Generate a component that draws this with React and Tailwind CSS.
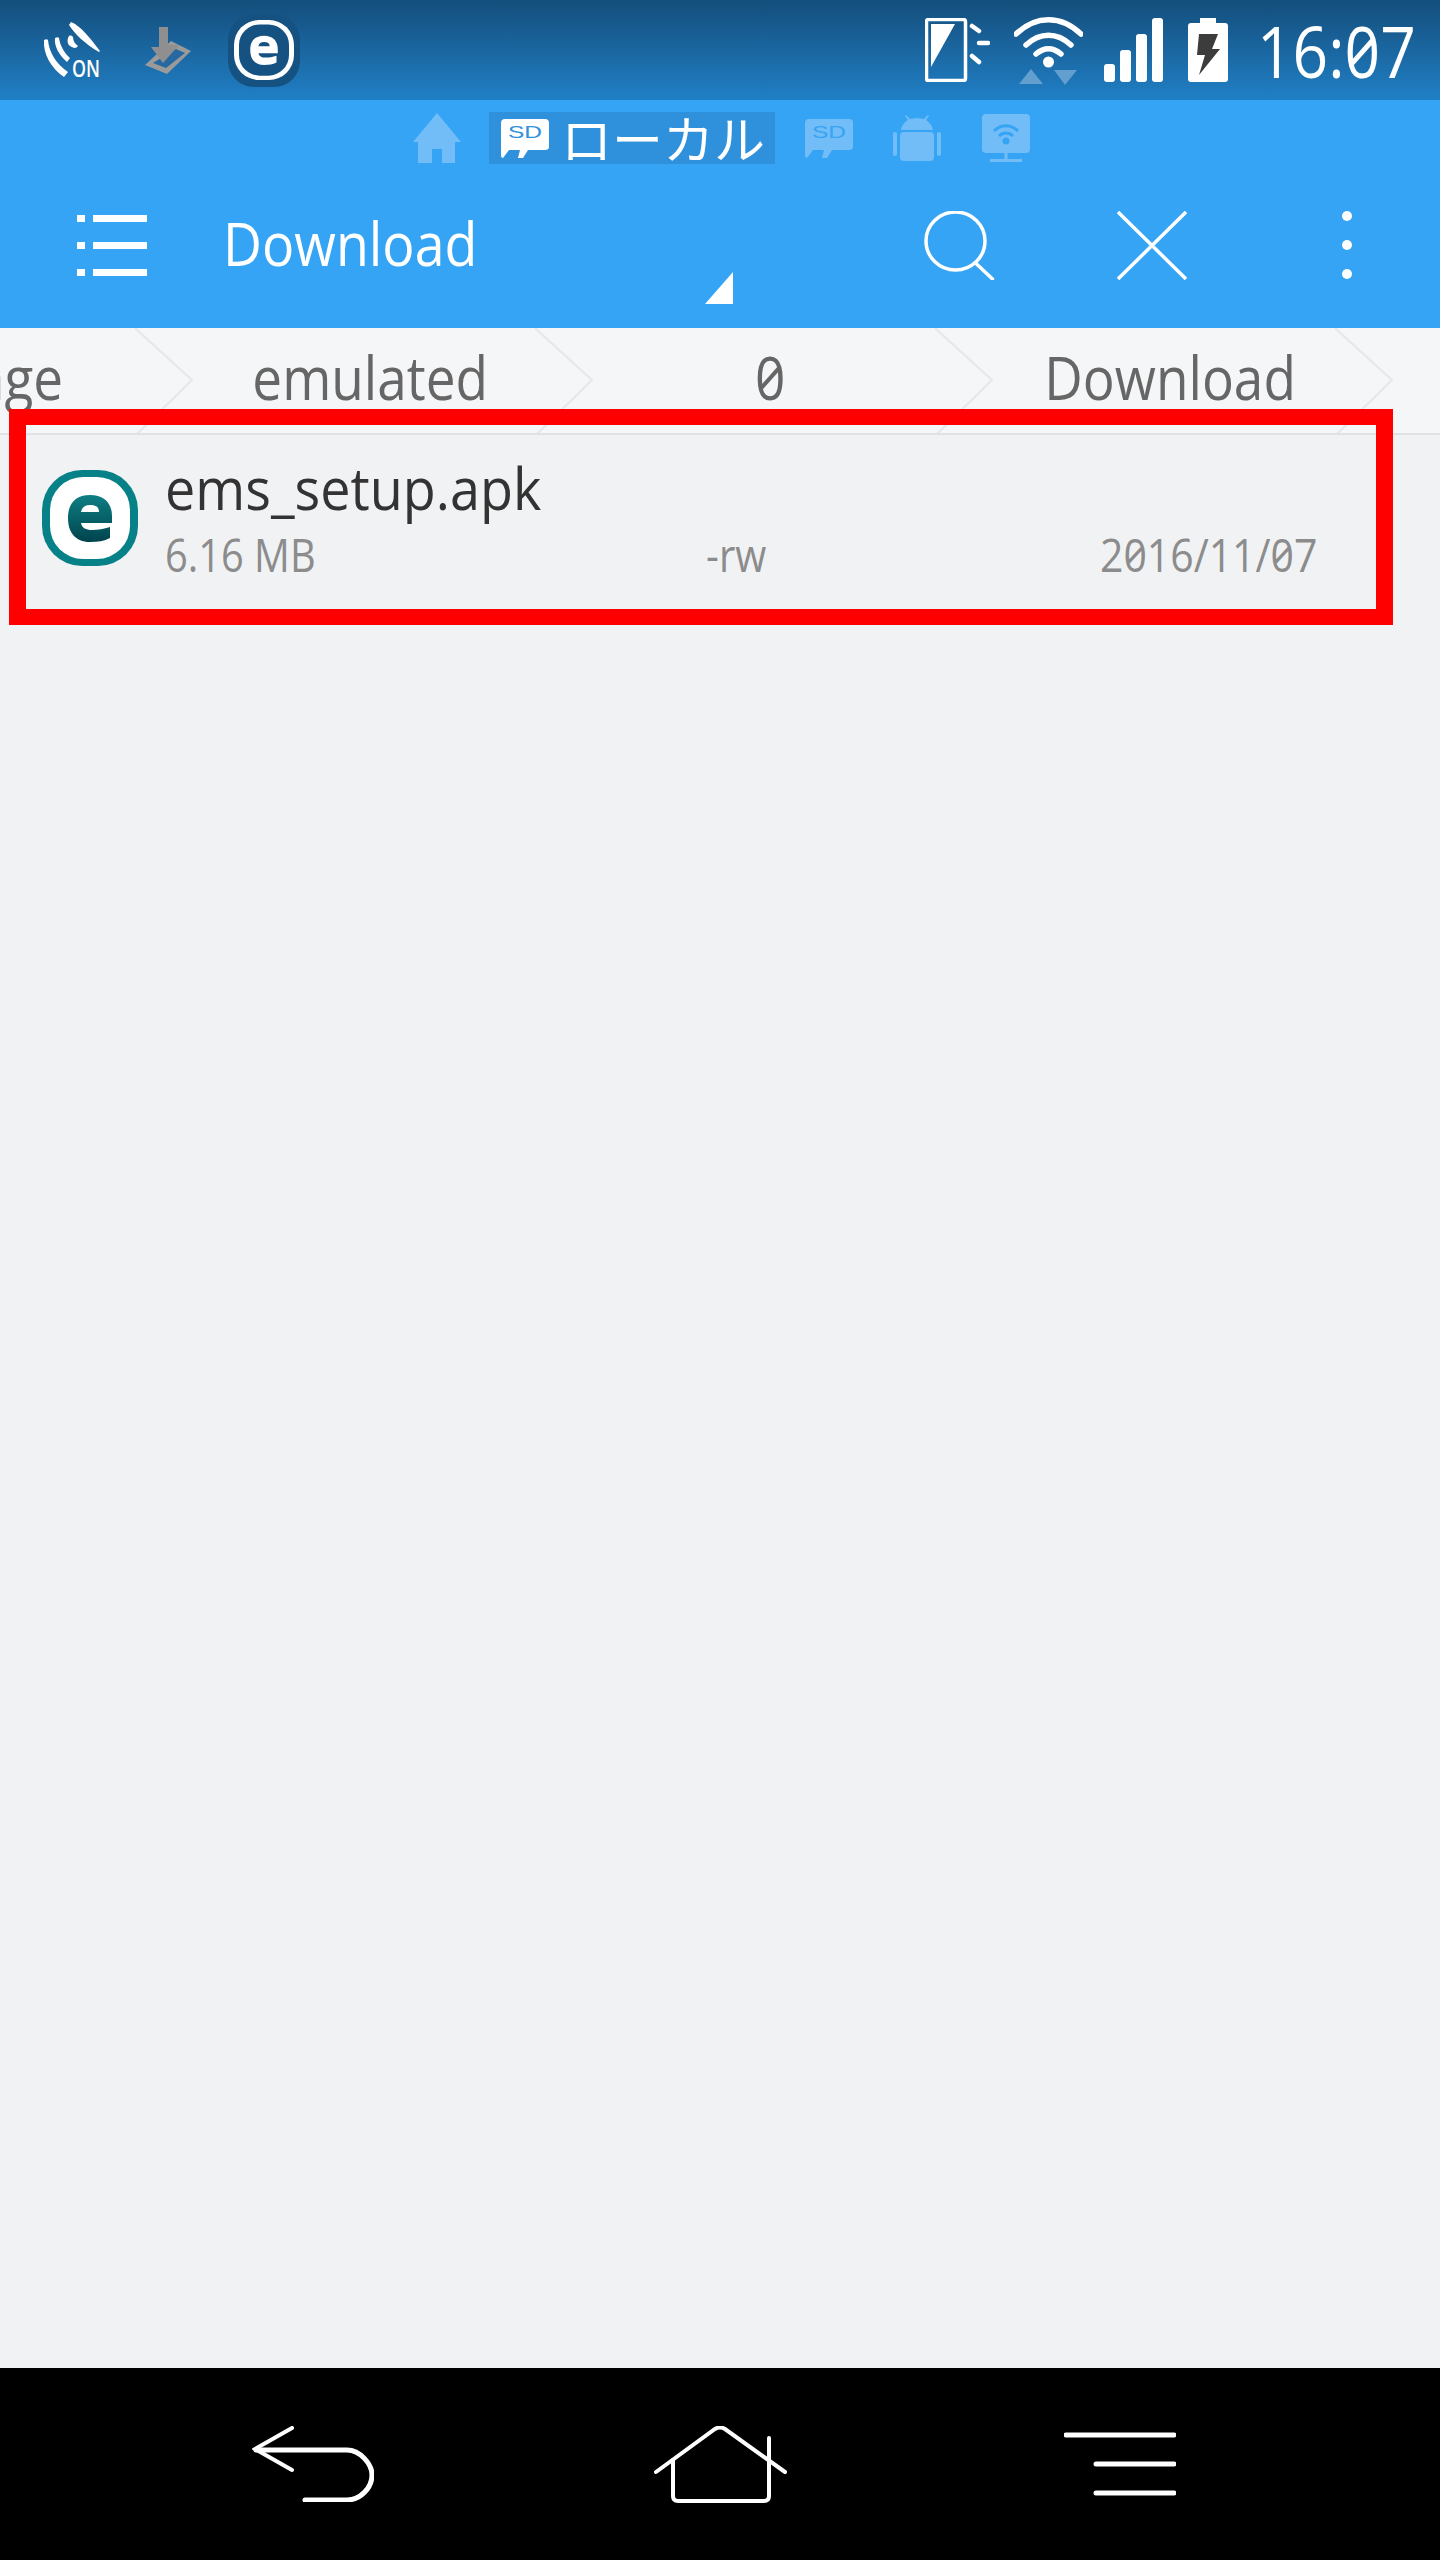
import React from "react";

const font = "[font-family:'Open_Sans','Noto_Sans',sans-serif] [font-feature-settings:'zero'] whitespace-nowrap";

function EsetMark({ id, size = "w-[96px] h-[96px]", outer, inner, letter }) {
  return (
    <svg viewBox="0 0 96 96" className={size}>
      <defs>
        <linearGradient id={id} x1="0" y1="0" x2="0" y2="1">
          <stop offset="0" stopColor={letter[0]} />
          <stop offset="1" stopColor={letter[1]} />
        </linearGradient>
      </defs>
      <rect x="0" y="0" width="96" height="96" rx="40" fill={outer} />
      <rect x="8" y="7" width="80" height="82" rx="33" fill={inner} />
      <path fillRule="evenodd" d="M48 25C62 25 70 33 70 46V53H39C40 58 44 60 50 60C56 60 62 59 68 57V68C62 71 56 72 48 72C33 72 26 62 26 48C26 34 33 25 48 25ZM39 42H57C57 37 54 35 48 35C43 35 40 37 39 42Z" fill={`url(#${id})`} />
    </svg>
  );
}

function Sd({ tone, ink }) {
  return (
    <svg viewBox="0 0 48 39" className="w-[48px] h-[39px]">
      <path d="M4 0H44Q48 0 48 4V28Q48 31 44 31H27L22 39H17L19 31H8L2 39Q0 39 0 36V4Q0 0 4 0Z" fill={tone} />
      <text x="24" y="19" textAnchor="middle" fontSize="17" textLength="34" lengthAdjust="spacingAndGlyphs" fontWeight="400" fill={ink} fontFamily="Liberation Sans">SD</text>
    </svg>
  );
}

function Crumb({ label, first }) {
  return (
    <div className={`relative w-[400px] shrink-0 h-full flex justify-center ${first ? "ml-[-230px]" : ""}`}>
      <span className={`${font} text-[60px] leading-[60px] mt-[19px] text-[#666] scale-x-[0.885]`}>{label}</span>
      <svg viewBox="0 0 64 106" className="absolute right-[-26px] top-0 w-[64px] h-[106px]" fill="none" stroke="#e6e7ea" strokeWidth="2">
        <path d="M3 0L60 52L5 106" />
      </svg>
    </div>
  );
}

export default function App() {
  return (
    <div className="relative w-[1440px] h-[2560px] flex flex-col bg-[#f1f2f4] overflow-hidden">
      {/* status bar */}
      <div className="h-[100px] shrink-0 flex items-center bg-gradient-to-b from-[#144e7c] to-[#2080c6] pl-[43px] pr-[27px]">
        <svg viewBox="0 0 59 57" className="w-[59px] h-[57px]" fill="#fff">
          <path d="M28 0C38 4 47 16 57 29L56 30C42 22 32 12 26 3Z" />
          <path d="M1 18C3 17 4 17 5 18C6 30 13 42 25 50L21 55C8 46 0 32 1 18Z" />
          <path d="M12 16C14 15 15 15 16 16C17 23 21 31 27 36L24 40C16 33 11 24 12 16Z" />
          <path d="M26 14C28 13 29 14 30 15C30 19 32 22 35 24C33 27 30 26 27 24C24 22 24 17 26 14Z" />
          <text x="29" y="55" fontSize="24" textLength="28" lengthAdjust="spacingAndGlyphs" fontFamily="Open Sans" fontWeight="600" fill="#fff">ON</text>
        </svg>
        <svg viewBox="0 0 46 47" className="w-[46px] h-[47px] ml-[43px]">
          <path d="M26 14L46 24L22 47L0 38Z" fill="#9a9a9a" />
          <path d="M31 22L40 26L21 41L8 36Z" fill="#26689f" />
          <path d="M14 0H23V18L34 18L18 36L6 20H14Z" fill="#8f8f8f" />
        </svg>
        <div className="ml-[37px] w-[72px] h-[73px] rounded-[26px] bg-[#155282] flex items-center justify-center">
          <EsetMark id="st" size="w-[60px] h-[60px]" outer="#fff" inner="#155282" letter={["#fff", "#fff"]} />
        </div>
        <svg viewBox="0 0 65 64" className="w-[65px] h-[64px] ml-auto" fill="none" stroke="#fff">
          <rect x="1.5" y="1.5" width="39" height="61" rx="2" strokeWidth="3.5" />
          <path d="M6 6H30L6 49Z" fill="#fff" stroke="none" />
          <path d="M54 13L47 8M54 25H63M47 38L54 44" strokeWidth="4.5" strokeLinecap="round" />
        </svg>
        <svg viewBox="0 0 69 69" className="w-[69px] h-[69px] ml-[24px]" fill="none" stroke="#fff" strokeLinecap="round">
          <path d="M2 18C22 -1 47 -1 67 18" strokeWidth="5.5" />
          <path d="M12 29C26 16 43 16 57 29" strokeWidth="5.5" />
          <path d="M22 38C30 31 39 31 47 38" strokeWidth="5.5" />
          <circle cx="34.5" cy="46" r="5.5" fill="#fff" stroke="none" />
          <path d="M5 68L17 53L29 68Z" fill="#629fcf" stroke="none" />
          <path d="M40 54H63L51 69Z" fill="#629fcf" stroke="none" />
        </svg>
        <svg viewBox="0 0 59 64" className="w-[59px] h-[64px] ml-[21px]" fill="#fff">
          <rect x="0" y="46" width="11" height="18" rx="3" />
          <rect x="16" y="32" width="11" height="32" rx="3" />
          <rect x="32" y="16" width="11" height="48" rx="3" />
          <rect x="48" y="0" width="11" height="64" rx="3" />
        </svg>
        <svg viewBox="0 0 40 64" className="w-[40px] h-[64px] ml-[25px]">
          <path d="M12 0H28V5H37Q40 5 40 8V61Q40 64 37 64H3Q0 64 0 61V8Q0 5 3 5H12Z" fill="#fff" />
          <path d="M11 16H30L24 31H32L11 57L17 37H9Z" fill="#3c3c3c" />
        </svg>
        <span className={`${font} text-[72px] leading-[72px] text-white w-[156px] ml-[29px] origin-left scale-x-[0.865]`}>16:07</span>
      </div>

      {/* toolbar */}
      <div className="h-[228px] shrink-0 bg-[#36a4f5] flex flex-col">
        <div className="h-[52px] mt-[12px] flex items-center pl-[413px]">
          <svg viewBox="0 0 48 50" className="w-[48px] h-[50px]" fill="#72bdf8">
            <path d="M24 0L48 29H42V50H29V36H19V50H5V29H0Z" />
          </svg>
          <div className="ml-[28px] w-[286px] h-[52px] bg-[#2f90dc] flex items-center pl-[12px]">
            <Sd tone="#ffffff" ink="#2f90dc" />
            <span className="[font-family:'Noto_Sans_CJK_JP',sans-serif] text-[51px] leading-[52px] text-white ml-[12px] whitespace-nowrap -mt-[3px]">ローカル</span>
          </div>
          <div className="ml-[30px]"><Sd tone="#72bdf8" ink="#36a4f5" /></div>
          <svg viewBox="0 0 48 46" className="w-[48px] h-[46px] ml-[40px]" fill="#72bdf8">
            <path d="M8 15C9 9 13 6 15 5L12 1L13 0L17 4C21 3 27 3 31 4L35 0L36 1L33 5C36 7 39 10 40 15Z" />
            <rect x="7" y="17" width="34" height="29" rx="4" />
            <rect x="0" y="17" width="4" height="24" rx="2" />
            <rect x="44" y="17" width="4" height="24" rx="2" />
          </svg>
          <svg viewBox="0 0 48 48" className="w-[48px] h-[48px] ml-[41px]" fill="none">
            <rect x="0" y="0" width="48" height="39" rx="4" fill="#72bdf8" />
            <path d="M12 17C19 10 29 10 36 17M17 22C21 18 27 18 31 22" stroke="#36a4f5" strokeWidth="3" />
            <circle cx="24" cy="27" r="3.5" fill="#36a4f5" />
            <path d="M24 39V46M8 46.5H40" stroke="#72bdf8" strokeWidth="3" />
          </svg>
        </div>
        <div className="relative h-[162px] flex items-center pl-[77px]">
          <svg viewBox="0 0 70 61" className="w-[70px] h-[61px] shrink-0" fill="#fff">
            <rect x="0" y="0" width="8" height="7" /><rect x="16" y="0" width="54" height="7" />
            <rect x="0" y="27" width="8" height="7" /><rect x="16" y="27" width="54" height="7" />
            <rect x="0" y="54" width="8" height="7" /><rect x="16" y="54" width="54" height="7" />
          </svg>
          <span className={`${font} text-[60px] leading-[60px] text-white ml-[76px] w-[700px] -mt-[4px] origin-left scale-x-[0.895]`}>Download</span>
          <svg viewBox="0 0 70 69" className="w-[71px] h-[69px] shrink-0 ml-[1px]" fill="none" stroke="#fff" strokeWidth="3.5">
            <ellipse cx="31" cy="30" rx="29.5" ry="29" />
            <path d="M51 52L68 68" strokeLinecap="round" />
          </svg>
          <svg viewBox="0 0 70 69" className="w-[70px] h-[69px] shrink-0 ml-[122px]" fill="none" stroke="#fff" strokeWidth="3.5">
            <path d="M1 1L69 68M69 1L1 68" />
          </svg>
          <div className="ml-[155px] flex flex-col gap-[19px]">
            <div className="w-[10px] h-[10px] rounded-full bg-white" />
            <div className="w-[10px] h-[10px] rounded-full bg-white" />
            <div className="w-[10px] h-[10px] rounded-full bg-white" />
          </div>
          <svg viewBox="0 0 28 32" className="absolute left-[705px] top-[108px] w-[28px] h-[32px]" fill="#fff">
            <path d="M28 0V32H0Z" />
          </svg>
        </div>
      </div>

      {/* breadcrumb */}
      <div className="h-[107px] shrink-0 bg-[#f5f6f8] border-b-2 border-[#e1e2e5] flex overflow-hidden">
        <Crumb label="storage" first />
        <Crumb label="emulated" />
        <Crumb label="0" />
        <Crumb label="Download" />
      </div>

      {/* list */}
      <div className="flex-1 pt-[35px] pl-[42px]">
        <div className="flex items-start">
          <EsetMark id="app" outer="#058187" inner="#ffffff" letter={["#0e7f84", "#00434d"]} />
          <div className="ml-[27px] w-[1147px] flex flex-col">
            <span className={`${font} text-[58px] leading-[58px] text-[#333] -mt-[11px] origin-left scale-x-[0.93]`}>ems_setup.apk</span>
            <div className="flex items-center mt-[15px] h-[46px] text-[#8c8c8c] text-[45px] leading-[46px]">
              <span className={`${font} w-[541px] shrink-0 origin-left scale-x-[0.885]`}>6.16 MB</span>
              <span className={`${font} w-[394px] shrink-0 origin-left scale-x-[0.89]`}>-rw</span>
              <span className={`${font} shrink-0 origin-left scale-x-[0.91]`}>2016/11/07</span>
            </div>
          </div>
        </div>
      </div>

      {/* highlight */}
      <div className="absolute left-[9px] top-[409px] w-[1384px] h-[216px] border-x-[17px] border-y-[16px] border-[#ff0000]" />

      {/* nav */}
      <div className="h-[192px] shrink-0 bg-black flex items-center pl-[252px]">
        <svg viewBox="0 0 122 76" className="w-[122px] h-[76px]" fill="none" stroke="#fff" strokeLinecap="round">
          <path d="M40 2L3 23L40 44" strokeWidth="4" />
          <path d="M4 24H95C108 24 120 38 120 49C120 62 108 74 95 74H53" strokeWidth="5" />
        </svg>
        <svg viewBox="0 0 133 77" className="w-[133px] h-[77px] ml-[280px]" fill="none" stroke="#fff" strokeLinecap="round">
          <path d="M2 46L61 3Q66 0 71 3L131 46" strokeWidth="4" />
          <path d="M19 34V70Q19 75 24 75H110Q115 75 115 70V12" strokeWidth="4" />
        </svg>
        <svg viewBox="0 0 112 64" className="w-[112px] h-[64px] ml-[277px]" fill="none" stroke="#fff" strokeWidth="5" strokeLinecap="round">
          <path d="M2 3H110M32 32H110M32 61H110" />
        </svg>
      </div>
    </div>
  );
}
